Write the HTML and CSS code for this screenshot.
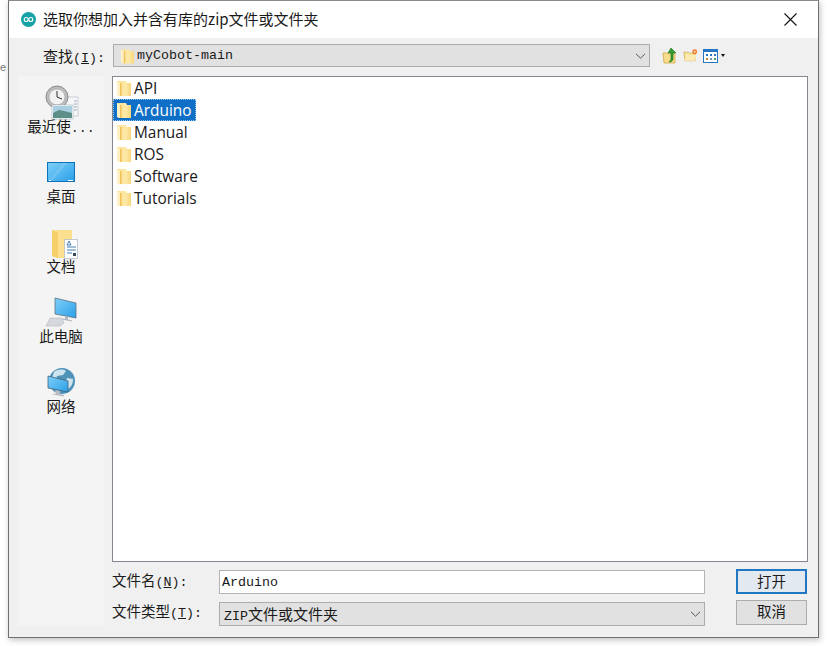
FILE: index.html
```html
<!DOCTYPE html>
<html lang="zh-CN">
<head>
    <meta charset="UTF-8">
    <title>选取你想加入并含有库的zip文件或文件夹</title>
    <link rel="stylesheet" href="styles.css">
</head>
<body>
    <svg class="defs" width="0" height="0">
        <defs>
            <linearGradient id="folderFill" x1="0" y1="0" x2="1" y2="0">
                <stop offset="0" stop-color="#fbe08f"/>
                <stop offset="0.6" stop-color="#fde9a8"/>
                <stop offset="1" stop-color="#f8d67c"/>
            </linearGradient>
            <linearGradient id="screenFill" x1="0" y1="0" x2="1" y2="1">
                <stop offset="0" stop-color="#7fd0fa"/>
                <stop offset="1" stop-color="#2a9fe8"/>
            </linearGradient>
            <symbol id="folder" viewBox="0 0 14 16">
                <path d="M0 1h9l1 2h4v13H3L0 15z" fill="url(#folderFill)"/>
                <path d="M0 1l3 2v13l-3-1z" fill="#fdf0c4"/>
                <path d="M3 3h1.500v13H3z" fill="#efc25a"/>
            </symbol>
            <symbol id="chevron" viewBox="0 0 11 6">
                <path d="M1 .8l4.500 4.400L10 .8" fill="none" stroke="#555" stroke-width="1"/>
            </symbol>
        </defs>
    </svg>

    <span class="behind">e</span>

    <div class="window">
        <!-- title bar -->
        <div class="titlebar">
            <svg class="app-icon" width="15" height="15" viewBox="0 0 15 15">
                <circle cx="7.500" cy="7.500" r="7.500" fill="#17a2a6"/>
                <circle cx="5.200" cy="7.500" r="2" fill="none" stroke="#fff" stroke-width="1.100"/>
                <circle cx="9.800" cy="7.500" r="2" fill="none" stroke="#fff" stroke-width="1.100"/>
            </svg>
            <span class="title">选取你想加入并含有库的zip文件或文件夹</span>
            <svg class="close" width="13" height="13" viewBox="0 0 13 13">
                <path d="M.5.5l12 12M12.500.5l-12 12" stroke="#111" stroke-width="1.100" fill="none"/>
            </svg>
        </div>

        <div class="content">
            <!-- look in row -->
            <div class="lookin">
                <label class="lookin-label">查找<span class="mono">(<u>I</u>):</span></label>
                <div class="combo lookin-combo">
                    <svg class="folder-small" width="13" height="16"><use href="#folder"/></svg>
                    <span class="mono combo-text">myCobot-main</span>
                    <svg class="chevron" width="11" height="6"><use href="#chevron"/></svg>
                </div>
                <div class="toolbar">
                    <svg width="16" height="17" viewBox="0 0 16 17">
                        <path d="M1 6h5l1 1h6v9H2z" fill="#f7dc8c" stroke="#d0a94a" stroke-width=".8"/>
                        <path d="M9 1l5 5h-3v6c0 2-2 3-4 3 1-1 2-2 2-4V6H6z" fill="#2f9e2f" stroke="#1c6f1c" stroke-width=".6"/>
                    </svg>
                    <svg width="15" height="15" viewBox="0 0 16 15">
                        <path d="M1 4h5l1 1h6v8H2z" fill="#f9e29b" stroke="#d0a94a" stroke-width=".8"/>
                        <path d="M1.500 13l1.500-6h11l-1 6z" fill="#fcebb4"/>
                        <circle cx="12.500" cy="3.500" r="2.600" fill="#ee7b32"/>
                        <circle cx="12.500" cy="3.500" r="1" fill="#fde3b0"/>
                    </svg>
                    <span class="view-btn">
                        <svg width="15" height="14" viewBox="0 0 15 14">
                            <rect x=".5" y=".5" width="14" height="13" fill="#fff" stroke="#2a76c6"/>
                            <rect x="1" y="1" width="13" height="2" fill="#2a76c6"/>
                            <path d="M3 5h2v2H3zM7 5h2v2H7zM11 5h2v2h-2z" fill="#2a76c6"/>
                            <path d="M3 9h2v2H3z" fill="#d9822b"/>
                            <path d="M7 9h2v2H7z" fill="#7a8fa6"/>
                            <path d="M11 9h2v2h-2z" fill="#4a9e5c"/>
                        </svg>
                        <i class="caret"></i>
                    </span>
                </div>
            </div>

            <div class="main">
                <!-- places sidebar -->
                <div class="sidebar">
                    <div class="place">
                        <svg class="place-icon" viewBox="0 0 36 32">
                            <rect x="22" y="13" width="13" height="19" fill="#f4f6f8" stroke="#b9c0c8" stroke-width=".7"/>
                            <path d="M31 17h3M31 20h3M31 23h3M31 26h3" stroke="#8d99a6" stroke-width=".8"/>
                            <circle cx="14" cy="13" r="11" fill="#bdbdbd" stroke="#8a8a8a"/>
                            <circle cx="14" cy="13" r="8" fill="#f1f1f1" stroke="#a5a5a5" stroke-width=".7"/>
                            <path d="M14 7v6l5 2" fill="none" stroke="#333" stroke-width="1"/>
                            <rect x="9" y="21" width="21" height="14" fill="#fff" stroke="#9fb0b8" stroke-width=".6"/>
                            <rect x="10" y="22" width="19" height="7" fill="#a9cfe0"/>
                            <path d="M10 29l6-3 5 1 8 2v5H10z" fill="#5d8f88"/>
                        </svg>
                        <span class="place-label">最近使<span class="mono">...</span></span>
                    </div>
                    <div class="place">
                        <svg class="place-icon" viewBox="0 0 36 32">
                            <rect x="4.500" y="8.500" width="27" height="19" fill="url(#screenFill)" stroke="#1172b8"/>
                            <path d="M6 26l14-17h4L10 26z" fill="#fff" opacity=".12"/>
                            <path d="M6 26.500h2M25 26.500h5" stroke="#fff" stroke-width="1"/>
                        </svg>
                        <span class="place-label">桌面</span>
                    </div>
                    <div class="place">
                        <svg class="place-icon" viewBox="0 0 36 32">
                            <path d="M9 6h20v28H14l-5-2z" fill="#fbe08f"/>
                            <path d="M9 6l6 3v25l-6-2z" fill="#f6cf6a"/>
                            <rect x="21.500" y="15.500" width="13" height="19" fill="#fff" stroke="#a9b7c4" stroke-width=".7"/>
                            <path d="M26 17l-2 4h4zM24 23h9M24 26h9M24 29h5" fill="none" stroke="#3f7fb5" stroke-width="1"/>
                            <rect x="30" y="29" width="3" height="3" fill="#35475a"/>
                        </svg>
                        <span class="place-label">文档</span>
                    </div>
                    <div class="place">
                        <svg class="place-icon" viewBox="0 0 36 32">
                            <path d="M3 32l4-8h12l2 5-4 3z" fill="#d5d9dd" stroke="#b5bbc1" stroke-width=".6"/>
                            <path d="M12 4l21 5v15l-21-4z" fill="url(#screenFill)" stroke="#5f7484" stroke-width=".8"/>
                            <path d="M22 22l3 .5v3l4 1v1l-10-2v-1l3 .5z" fill="#aeb6bd"/>
                        </svg>
                        <span class="place-label">此电脑</span>
                    </div>
                    <div class="place">
                        <svg class="place-icon" viewBox="0 0 36 32">
                            <circle cx="19" cy="17" r="13" fill="#4f93b8"/>
                            <path d="M11 8c4-3 9-3 12-1l-3 4-6 1-1 4-4-2zM24 14l6 1c0 5-2 8-5 10l-3-5z" fill="#cfe4ee"/>
                            <path d="M5 12l20 5v11L5 24z" fill="url(#screenFill)" stroke="#43637a" stroke-width=".8"/>
                            <path d="M12 26l5 1v3l4 1v1.500l-11-2v-1l3 .5z" fill="#b4bbc1"/>
                        </svg>
                        <span class="place-label">网络</span>
                    </div>
                </div>

                <div class="right">
                    <!-- file list -->
                    <div class="filelist">
                        <div class="file"><svg width="14" height="16"><use href="#folder"/></svg><span>API</span></div>
                        <div class="file selected"><svg width="14" height="16"><use href="#folder"/></svg><span>Arduino</span></div>
                        <div class="file"><svg width="14" height="16"><use href="#folder"/></svg><span>Manual</span></div>
                        <div class="file"><svg width="14" height="16"><use href="#folder"/></svg><span>ROS</span></div>
                        <div class="file"><svg width="14" height="16"><use href="#folder"/></svg><span>Software</span></div>
                        <div class="file"><svg width="14" height="16"><use href="#folder"/></svg><span>Tutorials</span></div>
                    </div>

                    <!-- file name and type -->
                    <div class="form">
                        <label class="form-label">文件名<span class="mono">(<u>N</u>):</span></label>
                        <input class="name-input" type="text" value="Arduino">
                        <button class="btn btn-default">打开</button>

                        <label class="form-label">文件类型<span class="mono">(<u>T</u>):</span></label>
                        <div class="combo type-combo">
                            <span class="type-text"><span class="mono">ZIP</span>文件或文件夹</span>
                            <svg class="chevron" width="11" height="6"><use href="#chevron"/></svg>
                        </div>
                        <button class="btn">取消</button>
                    </div>
                </div>
            </div>
        </div>
    </div>
</body>
</html>
```

FILE: styles.css
```css
html, body {
    margin: 0;
    height: 100%;
    overflow: hidden;
}
body {
    background-color: #fff;
    color: #1a1a1a;
    font-family: "Noto Sans CJK SC", "Noto Sans", sans-serif;
    font-size: 15px;
}
.defs {
    position: absolute;
}
/* leftover letter from the window behind the dialog */
.behind {
    position: absolute;
    left: 0;
    top: 61px;
    color: #777;
    font-family: "Liberation Sans", sans-serif;
    font-size: 11px;
}
.mono {
    font-family: "Liberation Mono", monospace;
    font-size: 13.33px;
}
.window {
    box-sizing: border-box;
    width: 811px;
    height: 638px;
    margin-left: 8px;
    background-color: #f0f0f0;
    border: 1px solid #6f6f6f;
    border-top-color: #8a8a8a;
    box-shadow: 1px 2px 6px rgba(0, 0, 0, 0.25);
    display: flex;
    flex-direction: column;
}
.titlebar {
    height: 37px;
    flex: none;
    background-color: #fff;
    display: flex;
    align-items: center;
    padding: 0 21px 0 12px;
}
.app-icon {
    flex: none;
}
.title {
    flex: 1;
    margin: 0 0 2px 7px;
    font-size: 15px;
    white-space: nowrap;
}
.content {
    flex: 1;
    padding: 6px 10px 0 9px;
    display: flex;
    flex-direction: column;
}
.lookin {
    height: 23px;
    display: flex;
    align-items: center;
}
.lookin-label {
    width: 95px;
    padding-left: 25px;
    box-sizing: border-box;
    white-space: nowrap;
}
.combo {
    box-sizing: border-box;
    display: flex;
    align-items: center;
    background-color: #e1e1e1;
    border: 1px solid #adadad;
}
.lookin-combo {
    width: 537px;
    height: 23px;
    padding-left: 7px;
}
.folder-small {
    flex: none;
}
.combo-text {
    flex: 1;
    margin-left: 3px;
}
.chevron {
    flex: none;
    margin-right: 3px;
}
.toolbar {
    display: flex;
    align-items: center;
    gap: 5px;
    margin-left: 12px;
}
.view-btn {
    display: flex;
    align-items: center;
    gap: 3px;
}
.caret {
    width: 0;
    height: 0;
    border-left: 2.5px solid transparent;
    border-right: 2.5px solid transparent;
    border-top: 3px solid #111;
}
.main {
    flex: 1;
    display: flex;
    gap: 8px;
    margin-top: 9px;
}
.sidebar {
    box-sizing: border-box;
    width: 86px;
    height: 550px;
    flex: none;
    padding-top: 8px;
    background-color: #f4f4f4;
    display: flex;
    flex-direction: column;
    gap: 18px;
}
.place {
    height: 52px;
    display: flex;
    flex-direction: column;
    align-items: center;
}
.place-icon {
    width: 36px;
    height: 32px;
    flex: none;
    overflow: visible;
}
.place-label {
    height: 20px;
    line-height: 20px;
    font-size: 14.5px;
    white-space: nowrap;
    position: relative;
}
.right {
    width: 696px;
    flex: none;
}
.filelist {
    box-sizing: border-box;
    height: 486px;
    background-color: #fff;
    border: 1px solid #828790;
}
.file {
    width: fit-content;
    height: 22px;
    display: flex;
    align-items: center;
    padding: 0 5px 0 4px;
    font-family: "Open Sans", "Noto Sans", sans-serif;
    font-size: 15.4px;
    color: #1a1a1a;
}
.file span {
    margin-left: 3px;
}
.file.selected {
    background-color: #0f6fc6;
    color: #fff;
    outline: 1px dotted #9cc4e8;
    outline-offset: -1px;
}
.form {
    display: grid;
    grid-template-columns: 107px 486px 71px;
    grid-template-rows: 25px 26px;
    margin-top: 7px;
    row-gap: 6px;
}
.form-label {
    white-space: nowrap;
    line-height: 22px;
    font-size: 14.5px;
}
.name-input {
    box-sizing: border-box;
    align-self: end;
    width: 486px;
    height: 24px;
    padding: 0 2px;
    background-color: #fff;
    border: 1px solid #b4b4b4;
    outline: none;
    color: #1a1a1a;
    font-family: "Liberation Mono", monospace;
    font-size: 13.33px;
}
.type-combo {
    align-self: end;
    width: 486px;
    height: 24px;
    padding: 0 0 0 4px;
}
.type-text {
    flex: 1;
    margin-bottom: 2px;
}
.btn {
    box-sizing: border-box;
    align-self: start;
    width: 71px;
    height: 25px;
    margin-left: 31px;
    padding: 0 0 5px;
    background-color: #e1e1e1;
    border: 1px solid #adadad;
    color: #1a1a1a;
    font-family: "Noto Sans CJK SC", sans-serif;
    font-size: 14.5px;
    line-height: 20px;
    cursor: pointer;
}
.btn-default {
    background-color: #e3e9f1;
    border: 2px solid #1f78c1;
}
```
